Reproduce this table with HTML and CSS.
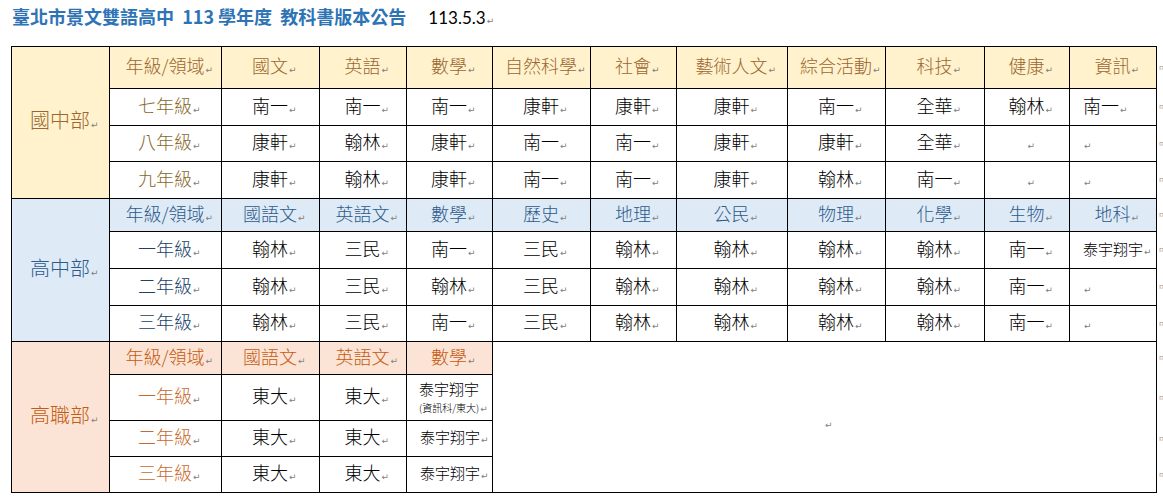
FILE: index.html
```html
<!DOCTYPE html>
<html lang="zh-Hant">
<head>
<meta charset="utf-8">
<title>教科書版本公告</title>
<link rel="stylesheet" href="styles.css">
</head>
<body>
<div class="page">
  <div class="heading">
    <h1 class="title">臺北市景文雙語高中&nbsp; 113 學年度&nbsp; 教科書版本公告</h1>
    <span class="date">113.5.3<i class="m">↵</i></span>
  </div>
  <table class="books">
    <colgroup>
      <col class="c-group"><col class="c-grade"><col class="c98"><col class="c87"><col class="c86">
      <col class="c98"><col class="c86"><col class="c111"><col class="c98"><col class="c99">
      <col class="c85"><col class="c87"><col class="c-eor">
    </colgroup>
    <tbody class="jh">
      <tr class="h42 head">
        <td class="group" rowspan="4">國中部<i class="m">↵</i></td>
        <td>年級/領域<i class="m">↵</i></td>
        <td>國文<i class="m">↵</i></td>
        <td>英語<i class="m">↵</i></td>
        <td>數學<i class="m">↵</i></td>
        <td>自然科學<i class="m">↵</i></td>
        <td>社會<i class="m">↵</i></td>
        <td>藝術人文<i class="m">↵</i></td>
        <td>綜合活動<i class="m">↵</i></td>
        <td>科技<i class="m">↵</i></td>
        <td>健康<i class="m">↵</i></td>
        <td>資訊<i class="m">↵</i></td>
        <td class="eor">¤</td>
      </tr>
      <tr class="h37">
        <td class="grade">七年級<i class="m">↵</i></td>
        <td>南一<i class="m">↵</i></td><td>南一<i class="m">↵</i></td><td>南一<i class="m">↵</i></td>
        <td>康軒<i class="m">↵</i></td><td>康軒<i class="m">↵</i></td><td>康軒<i class="m">↵</i></td>
        <td>南一<i class="m">↵</i></td><td>全華<i class="m">↵</i></td><td>翰林<i class="m">↵</i></td>
        <td class="left">南一<i class="m">↵</i></td>
        <td class="eor">¤</td>
      </tr>
      <tr class="h36">
        <td class="grade">八年級<i class="m">↵</i></td>
        <td>康軒<i class="m">↵</i></td><td>翰林<i class="m">↵</i></td><td>康軒<i class="m">↵</i></td>
        <td>南一<i class="m">↵</i></td><td>南一<i class="m">↵</i></td><td>康軒<i class="m">↵</i></td>
        <td>康軒<i class="m">↵</i></td><td>全華<i class="m">↵</i></td><td><i class="m">↵</i></td>
        <td class="left"><i class="m">↵</i></td>
        <td class="eor">¤</td>
      </tr>
      <tr class="h37">
        <td class="grade">九年級<i class="m">↵</i></td>
        <td>康軒<i class="m">↵</i></td><td>翰林<i class="m">↵</i></td><td>康軒<i class="m">↵</i></td>
        <td>南一<i class="m">↵</i></td><td>南一<i class="m">↵</i></td><td>康軒<i class="m">↵</i></td>
        <td>翰林<i class="m">↵</i></td><td>南一<i class="m">↵</i></td><td><i class="m">↵</i></td>
        <td class="left"><i class="m">↵</i></td>
        <td class="eor">¤</td>
      </tr>
    </tbody>
    <tbody class="sh">
      <tr class="h33 head">
        <td class="group" rowspan="4">高中部<i class="m">↵</i></td>
        <td>年級/領域<i class="m">↵</i></td>
        <td>國語文<i class="m">↵</i></td>
        <td>英語文<i class="m">↵</i></td>
        <td>數學<i class="m">↵</i></td>
        <td>歷史<i class="m">↵</i></td>
        <td>地理<i class="m">↵</i></td>
        <td>公民<i class="m">↵</i></td>
        <td>物理<i class="m">↵</i></td>
        <td>化學<i class="m">↵</i></td>
        <td>生物<i class="m">↵</i></td>
        <td>地科<i class="m">↵</i></td>
        <td class="eor">¤</td>
      </tr>
      <tr class="h37">
        <td class="grade">一年級<i class="m">↵</i></td>
        <td>翰林<i class="m">↵</i></td><td>三民<i class="m">↵</i></td><td>南一<i class="m">↵</i></td>
        <td>三民<i class="m">↵</i></td><td>翰林<i class="m">↵</i></td><td>翰林<i class="m">↵</i></td>
        <td>翰林<i class="m">↵</i></td><td>翰林<i class="m">↵</i></td><td>南一<i class="m">↵</i></td>
        <td class="left small">泰宇翔宇<i class="m">↵</i></td>
        <td class="eor">¤</td>
      </tr>
      <tr class="h37">
        <td class="grade">二年級<i class="m">↵</i></td>
        <td>翰林<i class="m">↵</i></td><td>三民<i class="m">↵</i></td><td>翰林<i class="m">↵</i></td>
        <td>三民<i class="m">↵</i></td><td>翰林<i class="m">↵</i></td><td>翰林<i class="m">↵</i></td>
        <td>翰林<i class="m">↵</i></td><td>翰林<i class="m">↵</i></td><td>南一<i class="m">↵</i></td>
        <td class="left"><i class="m">↵</i></td>
        <td class="eor">¤</td>
      </tr>
      <tr class="h36">
        <td class="grade">三年級<i class="m">↵</i></td>
        <td>翰林<i class="m">↵</i></td><td>三民<i class="m">↵</i></td><td>南一<i class="m">↵</i></td>
        <td>三民<i class="m">↵</i></td><td>翰林<i class="m">↵</i></td><td>翰林<i class="m">↵</i></td>
        <td>翰林<i class="m">↵</i></td><td>翰林<i class="m">↵</i></td><td>南一<i class="m">↵</i></td>
        <td class="left"><i class="m">↵</i></td>
        <td class="eor">¤</td>
      </tr>
    </tbody>
    <tbody class="voc">
      <tr class="h33 head">
        <td class="group" rowspan="4">高職部<i class="m">↵</i></td>
        <td>年級/領域<i class="m">↵</i></td>
        <td>國語文<i class="m">↵</i></td>
        <td>英語文<i class="m">↵</i></td>
        <td>數學<i class="m">↵</i></td>
        <td class="blank" colspan="7" rowspan="4"><i class="m">↵</i></td>
        <td class="eor">¤</td>
      </tr>
      <tr class="h46">
        <td class="grade">一年級<i class="m">↵</i></td>
        <td>東大<i class="m">↵</i></td><td>東大<i class="m">↵</i></td>
        <td class="left math"><span class="line">泰宇翔宇</span><span class="tiny">(資訊科/東大)<i class="m">↵</i></span></td>
        <td class="eor">¤</td>
      </tr>
      <tr class="h36">
        <td class="grade">二年級<i class="m">↵</i></td>
        <td>東大<i class="m">↵</i></td><td>東大<i class="m">↵</i></td>
        <td class="left small">泰宇翔宇<i class="m">↵</i></td>
        <td class="eor">¤</td>
      </tr>
      <tr class="h36">
        <td class="grade">三年級<i class="m">↵</i></td>
        <td>東大<i class="m">↵</i></td><td>東大<i class="m">↵</i></td>
        <td class="left small">泰宇翔宇<i class="m">↵</i></td>
        <td class="eor">¤</td>
      </tr>
    </tbody>
  </table>
</div>
</body>
</html>
```

FILE: styles.css
```css
html, body {
  margin: 0;
  padding: 0;
  background: #ffffff;
}

body {
  font-family: "Noto Sans CJK TC", "Noto Sans", sans-serif;
  color: #000;
}

.page {
  padding: 3px 0 0 11px;
}

.heading {
  display: flex;
  align-items: baseline;
  height: 43px;
}

.title {
  margin: 0 0 0 1px;
  font-size: 18px;
  font-weight: 700;
  line-height: 26px;
  color: #2e74b5;
  white-space: nowrap;
}

.date {
  margin-left: 22px;
  font-family: Lato, "Liberation Sans", sans-serif;
  font-size: 17px;
  color: #000;
}

.m {
  display: inline-block;
  width: 0;
  overflow: visible;
  font-style: normal;
  font-family: "DejaVu Sans", sans-serif;
  font-size: 9px;
  font-weight: normal;
  color: #808080;
  white-space: nowrap;
  vertical-align: baseline;
  padding-left: 1px;
}

.books {
  border-collapse: collapse;
  table-layout: fixed;
  width: 1152px;
}

.books td {
  border: 1px solid #000;
  padding: 0;
  text-align: center;
  vertical-align: middle;
  font-size: 18px;
  font-weight: 300;
  line-height: 24px;
  white-space: nowrap;
}

.books td.eor {
  border: none;
  text-align: left;
  font-size: 9px;
  color: #8a8a8a;
  padding-left: 2px;
}

.c-group { width: 98px; }
.c-grade { width: 112px; }
.c98 { width: 98px; }
.c99 { width: 99px; }
.c87 { width: 87px; }
.c86 { width: 86px; }
.c85 { width: 85px; }
.c111 { width: 111px; }
.c-eor { width: 7px; }

.h42 { height: 42px; }
.h37 { height: 37px; }
.h36 { height: 36px; }
.h33 { height: 33px; }
.h46 { height: 46px; }

.books td.group {
  font-size: 20px;
}

.books td.left {
  text-align: left;
  padding-left: 13px;
}

.books td.small {
  font-size: 15px;
}

.books td.math {
  padding-left: 12px;
  line-height: 18px;
}

.math .line {
  display: block;
  font-size: 15px;
  line-height: 22px;
}

.math .tiny {
  display: block;
  font-size: 10px;
  line-height: 16px;
}

.books td.blank {
  background: #ffffff;
  padding-top: 10px;
}

/* 國中部 */
.jh .group { background: #fff2cc; color: #94602f; }
.jh .head td:not(.eor) { background: #fff2cc; color: #9a6631; }
.jh .grade { color: #86692b; }

/* 高中部 */
.sh .group { background: #deeaf6; color: #3b72a8; }
.sh .head td:not(.eor) { background: #deeaf6; color: #2c5b8c; }
.sh .grade { color: #203f69; }

/* 高職部 */
.voc .group { background: #fbe4d5; color: #c8662a; }
.voc .head td:not(.eor):not(.blank) { background: #fbe4d5; color: #c55a11; }
.voc .grade { color: #c96a2c; }
```
